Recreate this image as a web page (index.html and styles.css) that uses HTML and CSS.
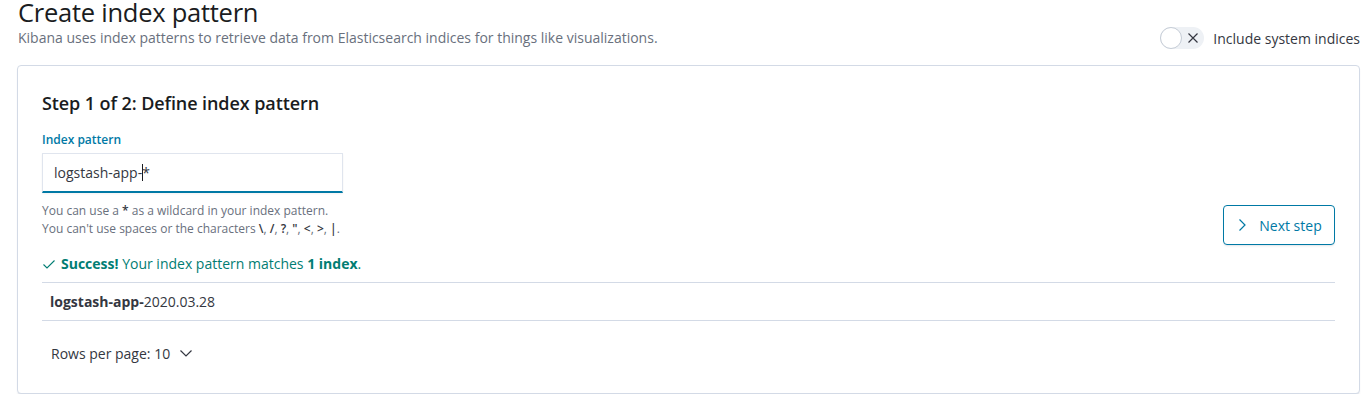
FILE: index.html
```html
<!DOCTYPE html>
<html>
<head>
<meta charset="utf-8">
<link rel="stylesheet" href="styles.css">
</head>
<body>
<div class="page">
  <div class="header">
    <div class="header-text">
      <h1 class="title">Create index pattern</h1>
      <p class="subtitle">Kibana uses index patterns to retrieve data from Elasticsearch indices for things like visualizations.</p>
    </div>
    <div class="switch">
      <span class="switch-track">
        <span class="switch-thumb"></span>
        <svg class="switch-x" width="12" height="12" viewBox="0 0 12 12"><path d="M1.5 1.5 L10.5 10.5 M10.5 1.5 L1.5 10.5" stroke="#343741" stroke-width="1.2" fill="none"/></svg>
      </span>
      <span class="switch-label">Include system indices</span>
    </div>
  </div>

  <div class="panel">
    <div class="step-row">
      <div class="step-form">
        <h2 class="step-title">Step 1 of 2: Define index pattern</h2>
        <label class="field-label">Index pattern</label>
        <div class="field-input"><span>logstash-app-</span><span class="caret"></span><span>*</span></div>
        <div class="help">
          <div>You can use a <b>*</b> as a wildcard in your index pattern.</div>
          <div>You can't use spaces or the characters <b>\</b>, <b>/</b>, <b>?</b>, <b>"</b>, <b>&lt;</b>, <b>&gt;</b>, <b>|</b>.</div>
        </div>
      </div>
      <button class="next-btn">
        <svg width="16" height="16" viewBox="0 0 16 16"><path d="M5.5 2.5 L11 8 L5.5 13.5" stroke="#0079a5" stroke-width="1.2" fill="none"/></svg>
        <span>Next step</span>
      </button>
    </div>

    <div class="success">
      <svg width="14" height="14" viewBox="0 0 14 14"><path d="M1.5 7.5 L5 11 L12.5 3.5" stroke="#017d73" stroke-width="1.1" fill="none"/></svg>
      <span><b>Success!</b> Your index pattern matches <b>1 index</b>.</span>
    </div>

    <div class="table">
      <div class="table-row"><b>logstash-app-</b>2020.03.28</div>
    </div>

    <div class="pagination">
      <span>Rows per page: 10</span>
      <svg width="14" height="14" viewBox="0 0 14 14"><path d="M1.5 4.5 L7 10 L12.5 4.5" stroke="#343741" stroke-width="1.2" fill="none"/></svg>
    </div>
  </div>
</div>
</body>
</html>
```

FILE: styles.css
```css
* { box-sizing: border-box; }
html, body { margin: 0; padding: 0; background: #fff; }
body {
  font-family: "Open Sans", "Liberation Sans", sans-serif;
  color: #343741;
  font-size: 14px;
}
.page {
  padding: 0 10px 0 17px;
}
.header {
  display: flex;
  justify-content: space-between;
  align-items: flex-end;
}
.title {
  margin: 0 0 3px 1px;
  font-size: 25.5px;
  line-height: 24px;
  font-weight: 400;
  color: #1a1c21;
  letter-spacing: -0.01em;
}
.subtitle {
  margin: 0 0 0 1px;
  font-size: 14px;
  line-height: 21px;
  color: #69707d;
}
.switch {
  display: flex;
  align-items: center;
  margin-bottom: -1px;
}
.switch-track {
  position: relative;
  width: 44px;
  height: 22px;
  border-radius: 11px;
  background: #eef1f5;
  display: flex;
  align-items: center;
}
.switch-thumb {
  width: 22px;
  height: 22px;
  border-radius: 50%;
  background: #fff;
  border: 1px solid #c5ccd6;
}
.switch-x {
  margin-left: 5px;
}
.switch-label {
  margin-left: 9px;
  font-size: 14px;
  line-height: 21px;
  color: #343741;
}
.panel {
  margin-top: 17px;
  border: 1px solid #d3dae6;
  border-radius: 4px;
  box-shadow: 0 2px 2px -1px rgba(152, 162, 179, 0.45);
  padding: 24px;
  background: #fff;
}
.step-row {
  display: flex;
  justify-content: space-between;
  align-items: flex-end;
}
.step-title {
  margin: 0 0 15px 0;
  font-size: 18px;
  line-height: 26px;
  font-weight: 600;
  color: #1a1c21;
  letter-spacing: -0.005em;
}
.field-label {
  display: block;
  font-size: 12px;
  line-height: 18px;
  font-weight: 600;
  color: #0079a5;
  margin-bottom: 4px;
}
.field-input {
  width: 301px;
  height: 40px;
  border: 1px solid #e0e5ee;
  border-bottom: 2px solid #0079a5;
  padding: 0 11px;
  display: flex;
  align-items: center;
  font-size: 14px;
  color: #343741;
  background: #fff;
  box-shadow: 0 1px 2px rgba(0,0,0,0.05);
}
.caret {
  display: inline-block;
  width: 1px;
  height: 17px;
  background: #1a1c21;
  margin: 0 -1px 0 0;
}
.help {
  margin-top: 9px;
  margin-bottom: 7px;
  font-size: 12px;
  line-height: 18px;
  color: #69707d;
}
.help b { color: #343741; font-weight: 600; }
.next-btn {
  display: flex;
  align-items: center;
  justify-content: center;
  gap: 9px;
  width: 112px;
  height: 40px;
  border: 1px solid #0079a5;
  border-radius: 4px;
  background: #fff;
  color: #0079a5;
  font-family: inherit;
  font-size: 14px;
  padding: 0 12px 0 10px;
  cursor: pointer;
  box-shadow: 0 2px 2px -1px rgba(152,162,179,0.3);
}
.success {
  margin-top: 8px;
  display: flex;
  align-items: center;
  gap: 5px;
  font-size: 14px;
  line-height: 21px;
  color: #017d73;
}
.success b { font-weight: 700; }
.table {
  margin-top: 8px;
  border-top: 1px solid #d3dae6;
}
.table-row {
  height: 38px;
  border-bottom: 1px solid #d3dae6;
  padding: 0 8px;
  display: flex;
  align-items: center;
  font-size: 14px;
  color: #343741;
}
.table-row b { font-weight: 700; }
.pagination {
  margin-top: 16px;
  height: 32px;
  display: flex;
  align-items: center;
  gap: 9px;
  padding-left: 9px;
  font-size: 14px;
  color: #343741;
}
```
